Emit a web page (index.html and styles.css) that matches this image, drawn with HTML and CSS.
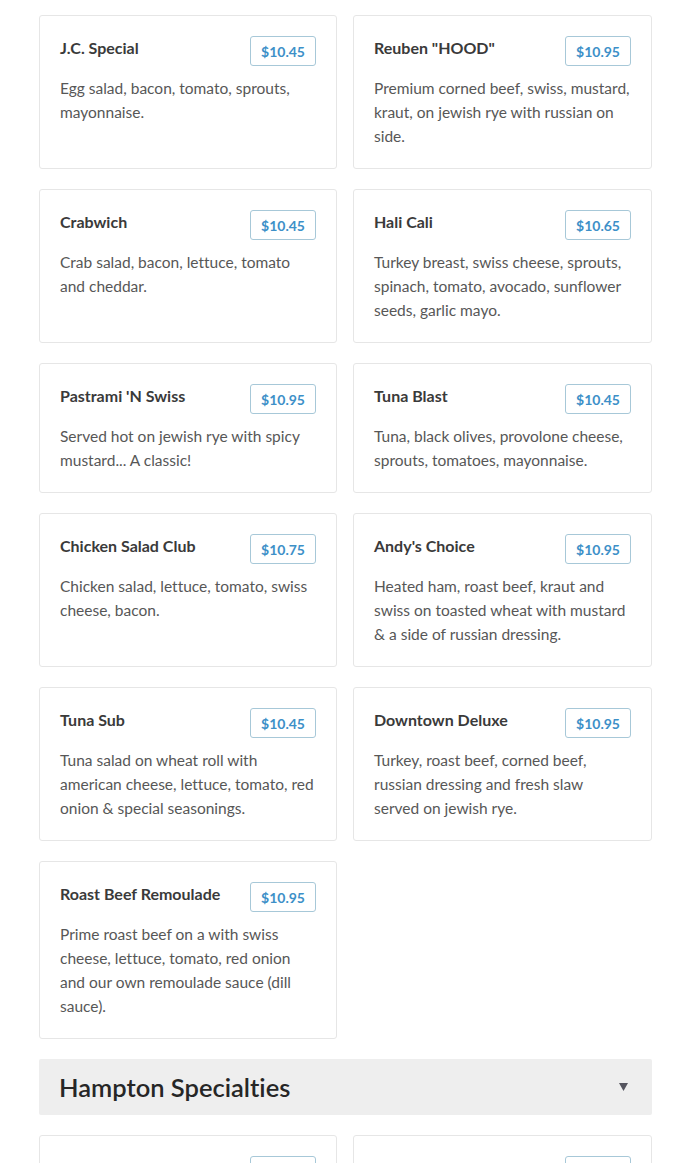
FILE: index.html
```html
<!DOCTYPE html>
<html>
<head>
<meta charset="utf-8">
<link rel="stylesheet" href="styles.css">
</head>
<body>
<div class="page">
  <div class="grid">
    <div class="card"><div class="head"><h3 class="title">J.C. Special</h3><span class="price">$10.45</span></div><p class="desc">Egg salad, bacon, tomato, sprouts, mayonnaise.</p></div>
    <div class="card"><div class="head"><h3 class="title">Reuben "HOOD"</h3><span class="price">$10.95</span></div><p class="desc">Premium corned beef, swiss, mustard, kraut, on jewish rye with russian on side.</p></div>
    <div class="card"><div class="head"><h3 class="title">Crabwich</h3><span class="price">$10.45</span></div><p class="desc">Crab salad, bacon, lettuce, tomato and cheddar.</p></div>
    <div class="card"><div class="head"><h3 class="title">Hali Cali</h3><span class="price">$10.65</span></div><p class="desc">Turkey breast, swiss cheese, sprouts, spinach, tomato, avocado, sunflower seeds, garlic mayo.</p></div>
    <div class="card"><div class="head"><h3 class="title">Pastrami 'N Swiss</h3><span class="price">$10.95</span></div><p class="desc">Served hot on jewish rye with spicy mustard... A classic!</p></div>
    <div class="card"><div class="head"><h3 class="title">Tuna Blast</h3><span class="price">$10.45</span></div><p class="desc">Tuna, black olives, provolone cheese, sprouts, tomatoes, mayonnaise.</p></div>
    <div class="card"><div class="head"><h3 class="title">Chicken Salad Club</h3><span class="price">$10.75</span></div><p class="desc">Chicken salad, lettuce, tomato, swiss cheese, bacon.</p></div>
    <div class="card"><div class="head"><h3 class="title">Andy's Choice</h3><span class="price">$10.95</span></div><p class="desc">Heated ham, roast beef, kraut and swiss on toasted wheat with mustard &amp; a side of russian dressing.</p></div>
    <div class="card"><div class="head"><h3 class="title">Tuna Sub</h3><span class="price">$10.45</span></div><p class="desc">Tuna salad on wheat roll with american cheese, lettuce, tomato, red onion &amp; special seasonings.</p></div>
    <div class="card"><div class="head"><h3 class="title">Downtown Deluxe</h3><span class="price">$10.95</span></div><p class="desc">Turkey, roast beef, corned beef, russian dressing and fresh slaw served on jewish rye.</p></div>
    <div class="card"><div class="head"><h3 class="title">Roast Beef Remoulade</h3><span class="price">$10.95</span></div><p class="desc">Prime roast beef on a with swiss cheese, lettuce, tomato, red onion and our own remoulade sauce (dill sauce).</p></div>
  </div>

  <div class="section">
    <h2 class="section-title">Hampton Specialties</h2>
    <svg class="caret" width="9" height="8" viewBox="0 0 9 8"><path d="M0 0 H9 L4.5 8 Z" fill="#55555f"/></svg>
  </div>

  <div class="grid">
    <div class="card"><div class="head"><h3 class="title">Hampton</h3><span class="price">$10.95</span></div><p class="desc">Turkey, bacon, lettuce, tomato and mayo.</p></div>
    <div class="card"><div class="head"><h3 class="title">Hampton Club Classic</h3><span class="price">$10.95</span></div><p class="desc">Ham, turkey, swiss, lettuce, tomato and mayo.</p></div>
  </div>
</div>
</body>
</html>
```

FILE: styles.css
```css
* { box-sizing: border-box; }
html, body { margin: 0; padding: 0; background: #fff; }
body {
  font-family: Lato, "Open Sans", sans-serif;
  color: #333;
  font-variant-ligatures: none;
}
.page {
  padding: 15px 38px 0 39px;
  display: flex;
  flex-direction: column;
  gap: 20px;
}
.grid {
  display: grid;
  grid-template-columns: 298fr 299fr;
  column-gap: 16px;
  row-gap: 20px;
}
.card {
  border: 1px solid #e6e6e6;
  border-radius: 3px;
  padding: 20px;
  background: #fff;
}
.head {
  display: flex;
  justify-content: space-between;
  align-items: flex-start;
  gap: 10px;
}
.title {
  margin: 0;
  font-size: 16px;
  line-height: 24px;
  font-weight: 700;
  color: #3a3a3a;
}
.price {
  flex: none;
  height: 30px;
  padding: 0 10px;
  border: 1px solid #a7c8d8;
  border-radius: 3px;
  font-size: 14px;
  font-weight: 700;
  line-height: 29px;
  color: #3d90c8;
}
.desc {
  margin: 10px 0 0;
  font-size: 15.5px;
  line-height: 24px;
  color: #575757;
}
.section {
  background: #eeeeee;
  border-radius: 2px;
  height: 56px;
  padding: 0 24px 0 20px;
  display: flex;
  align-items: center;
  justify-content: space-between;
}
.section-title {
  margin: 0;
  font-size: 25.5px;
  font-weight: 600;
  color: #262626;
  line-height: 28px;
}
.caret { display: block; }
```
